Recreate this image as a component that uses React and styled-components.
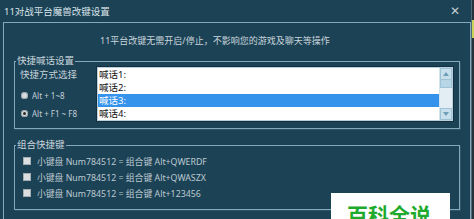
import styled, { createGlobalStyle } from "styled-components";

const GlobalStyle = createGlobalStyle`
  *, *::before, *::after {
    box-sizing: border-box;
  }
  html, body {
    margin: 0;
    padding: 0;
    background: #1c4256;
  }
  body {
    font-family: "Noto Sans", "Noto Sans CJK SC", sans-serif;
  }
`;

const Screen = styled.div`
  position: relative;
  display: flex;
  width: 474px;
  height: 219px;
  overflow: hidden;
  background: #1c4256;
`;

const Window = styled.div`
  display: flex;
  flex-direction: column;
  width: 471px;
  height: 100%;
`;

const TitleBar = styled.div`
  display: flex;
  align-items: center;
  justify-content: space-between;
  height: 22px;
  padding: 0 11px 0 4px;
  color: #dbe4e9;
  font-size: 9.5px;
`;

const Close = styled.span`
  color: #c3ccd1;
  font-size: 12px;
  line-height: 1;
`;

const Panel = styled.div`
  flex: 1;
  display: flex;
  flex-direction: column;
  margin-left: 3px;
  width: 468px;
  border: 1px solid #86a8bb;
  border-bottom: none;
  padding: 11px 10px 0 10px;
`;

const Notice = styled.div`
  padding-left: 86px;
  height: 14px;
  line-height: 14px;
  font-size: 9px;
  color: #c9d5db;
`;

const Group = styled.fieldset`
  margin: ${({ $top }) => $top}px 0 0 0;
  padding: ${({ $pad }) => $pad};
  border: 1px solid #86a8bb;
  box-shadow: 1px 1px 0 #2c5569;
  min-width: 0;
`;

const Legend = styled.legend`
  margin-left: 1px;
  padding: 0 1px;
  font-size: 9.5px;
  line-height: 12px;
  color: #c9d5db;
`;

const Row = styled.div`
  display: flex;
  align-items: flex-start;
`;

const Side = styled.div`
  width: 82px;
  padding-left: 5px;
  display: flex;
  flex-direction: column;
  color: #c4d0d6;
`;

const SideLabel = styled.div`
  font-size: 9.5px;
  line-height: 14px;
  margin-top: 1px;
`;

const Radio = styled.label`
  display: flex;
  align-items: center;
  gap: 4px;
  height: 18px;
  padding-left: 1px;
  font-size: 8px;
  margin-top: ${({ $gap }) => $gap}px;
`;

const Dot = styled.span`
  width: 7px;
  height: 7px;
  border-radius: 50%;
  background: #d9dde0;
  box-shadow: inset 0 0 0 1px #9aa3a8;
  display: flex;
  align-items: center;
  justify-content: center;

  &::after {
    content: "";
    width: 3px;
    height: 3px;
    border-radius: 50%;
    background: ${({ $on }) => ($on ? "#2a2a2a" : "transparent")};
  }
`;

const ListBox = styled.div`
  flex: 1;
  display: flex;
  height: 54px;
  border: 1px solid #b9cfdb;
  background: #ffffff;
  box-shadow: 0 0 0 1px #12303f;
`;

const Items = styled.div`
  flex: 1;
  display: flex;
  flex-direction: column;
`;

const Item = styled.div`
  height: 13px;
  line-height: 13px;
  padding-left: 1px;
  font-size: 9.5px;
  color: ${({ $sel }) => ($sel ? "#ffffff" : "#111111")};
  background: ${({ $sel }) => ($sel ? "#3593ec" : "transparent")};
`;

const Scroll = styled.div`
  width: 13px;
  display: flex;
  flex-direction: column;
  background: #e3eef4;
  border-left: 1px solid #d5e3ea;
`;

const ScrollBtn = styled.div`
  height: 12px;
  display: flex;
  align-items: center;
  justify-content: center;
  background: #c8e0ec;
  border: 1px solid #9fc3d6;
`;

const Thumb = styled.div`
  height: 8px;
  background: #b6d6e6;
  border: 1px solid #9fc3d6;
  border-top: none;
`;

const Track = styled.div`
  flex: 1;
`;

const Check = styled.label`
  display: flex;
  align-items: center;
  gap: 6px;
  height: 16px;
  padding-left: 8px;
  font-size: 8.8px;
  color: #bccad1;
`;

const Box = styled.span`
  width: 8px;
  height: 8px;
  background: #dcdfe1;
  box-shadow: inset 0 0 0 1px #a7aeb2;
`;

const Strip = styled.div`
  width: 3px;
  height: 100%;
  background: #24333c;
  border-left: 1px solid #4f6b7a;
  display: flex;
  flex-direction: column;
`;

const Yellow = styled.div`
  margin-top: 20px;
  height: 18px;
  background: #c8d35a;
`;

const Watermark = styled.div`
  position: absolute;
  left: 331px;
  top: 193px;
  width: 119px;
  height: 30px;
  background: #ffffff;
  padding: 9px 0 0 16px;
  color: #1faa2e;
  font-family: "Noto Sans CJK SC", sans-serif;
  font-weight: 700;
  font-size: 21px;
  line-height: 24px;
`;

const Arrow = ({ up }) => (
  <svg width="6" height="4" viewBox="0 0 6 4">
    <path d={up ? "M0 4 L3 0 L6 4 Z" : "M0 0 L3 4 L6 0 Z"} fill="#6e9fb8" />
  </svg>
);

const combos = ["Alt+QWERDF", "Alt+QWASZX", "Alt+123456"];

export default function App() {
  return (
    <Screen>
      <GlobalStyle />
      <Window>
        <TitleBar>
          <span>11对战平台魔兽改键设置</span>
          <Close>✕</Close>
        </TitleBar>
        <Panel>
          <Notice>11平台改键无需开启/停止，不影响您的游戏及聊天等操作</Notice>
          <Group $top={7} $pad="0 6px 6px 0">
            <Legend>快捷喊话设置</Legend>
            <Row>
              <Side>
                <SideLabel>快捷方式选择</SideLabel>
                <Radio $gap={4}>
                  <Dot />
                  Alt + 1~8
                </Radio>
                <Radio $gap={0}>
                  <Dot $on />
                  Alt + F1 ~ F8
                </Radio>
              </Side>
              <ListBox>
                <Items>
                  <Item>喊话1:</Item>
                  <Item>喊话2:</Item>
                  <Item $sel>喊话3:</Item>
                  <Item>喊话4:</Item>
                </Items>
                <Scroll>
                  <ScrollBtn>
                    <Arrow up />
                  </ScrollBtn>
                  <Thumb />
                  <Track />
                  <ScrollBtn>
                    <Arrow />
                  </ScrollBtn>
                </Scroll>
              </ListBox>
            </Row>
          </Group>
          <Group $top={10} $pad="2px 0 8px 0">
            <Legend>组合快捷键</Legend>
            {combos.map((c) => (
              <Check key={c}>
                <Box />
                小键盘 Num784512 = 组合键 {c}
              </Check>
            ))}
          </Group>
        </Panel>
      </Window>
      <Strip>
        <Yellow />
      </Strip>
      <Watermark>百科全说</Watermark>
    </Screen>
  );
}
